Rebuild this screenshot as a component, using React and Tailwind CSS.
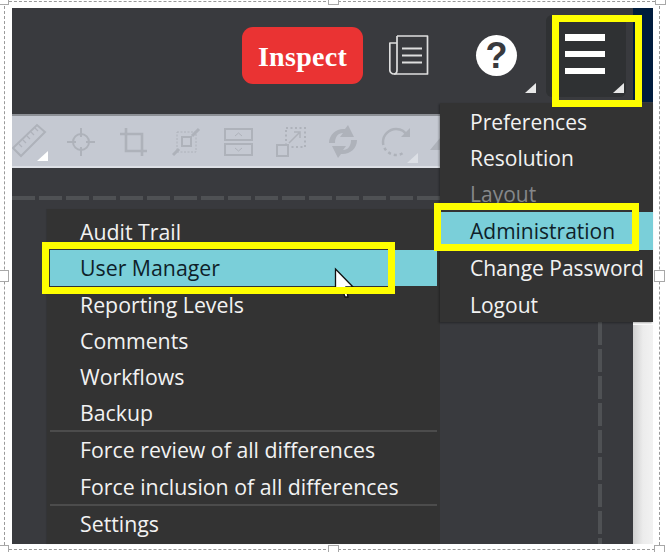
import React from "react";

const Tri = ({ className = "" }) => (
  <svg viewBox="0 0 11 10" className={"w-[11px] h-[10px] " + className}>
    <path d="M11 0V10H0Z" fill="currentColor" />
  </svg>
);

const DashH = () => (
  <svg className="w-full h-[4px] block" aria-hidden="true">
    <line x1="0" y1="2" x2="430" y2="2" stroke="#4f5154" strokeWidth="4" strokeDasharray="23 4" />
  </svg>
);

const ToolIcon = ({ children, w = 30 }) => (
  <svg viewBox={`0 0 ${w} 36`} style={{ width: w, height: 36 }} className="shrink-0 text-[#aeb2ba]" fill="none" stroke="currentColor" strokeWidth="2">
    {children}
  </svg>
);

const Item = ({ children, dim, active, className = "h-[36px] pl-[30px]" }) => (
  <div className={"flex items-center whitespace-nowrap " + className + (active ? " bg-[#7acfd9] text-[#0f1f2a]" : dim ? " text-[#85878a]" : " text-[#f2f2f2]")}>
    {children}
  </div>
);

const L = "h-[36px] pl-[33px]";

const Sep = ({ className = "" }) => <div className={"relative h-[2px] bg-[#4c4c4c] mx-[3px] -mt-[1px] " + className} />;

const YellowBox = ({ className }) => (
  <div className={"absolute border-[7px] border-[#ffff00] pointer-events-none " + className} />
);

const Handle = ({ className }) => (
  <div className={"absolute w-[11px] h-[12px] bg-white border border-[#a8a8a8] " + className} />
);

export default function App() {
  return (
    <div className="relative w-[666px] h-[552px] bg-white overflow-hidden font-['Open_Sans',sans-serif] text-[21px] leading-none pl-[12px] pr-[13px] pt-[8px] pb-[8px]">
      {/* selection frame */}
      <div className="absolute left-[4px] top-[1px] w-[656px] h-[549px] border border-dashed border-[#9a9a9a]" />
      <Handle className="left-[-2px] top-[-7px]" />
      <Handle className="left-[328px] top-[-7px]" />
      <Handle className="left-[655px] top-[-7px]" />
      <Handle className="left-[-2px] top-[270px]" />
      <Handle className="left-[654px] top-[270px]" />
      <Handle className="left-[-2px] top-[545px]" />
      <Handle className="left-[328px] top-[545px]" />
      <Handle className="left-[654px] top-[545px]" />

      <div className="relative w-[641px] h-[536px] flex bg-[#393a3e]">
        {/* main column */}
        <div className="w-[621px] flex flex-col">
          {/* header */}
          <div className="h-[106px] shrink-0 flex items-start pl-[230px]">
            <button className="mt-[19px] w-[121px] h-[57px] pt-[3px] rounded-[11px] bg-[#ea3333] text-white font-['Liberation_Serif',serif] font-bold text-[28px] tracking-[0.3px] flex items-center justify-center">
              Inspect
            </button>
            <svg viewBox="0 0 40 40" className="ml-[26px] mt-[27px] w-[40px] h-[40px] text-[#dedede]" fill="none" stroke="currentColor">
              <path d="M8 1H38.500V39H5C2.500 39 0.800 37 0.800 35V8H8" strokeWidth="1.700" strokeLinejoin="round" />
              <path d="M8 1V35C8 37 7 39 5 39" strokeWidth="1.700" />
              <path d="M13 13.500H33M13 20.500H33M13 27.500H33" strokeWidth="2.200" />
            </svg>
            <div className="relative ml-[47px] mt-[27px] w-[41px] h-[41px] rounded-full bg-white text-[#393a3e] font-['Liberation_Sans',sans-serif] font-bold text-[36px] flex items-center justify-center">
              ?
            </div>
            <Tri className="ml-[8px] mt-[75px] text-[#e8e8e8]" />
            <div className="ml-[10px] mt-[7px] w-[80px] h-[82px] rounded-[6px] bg-[#2f3133] flex flex-col pt-[19px] pl-[19px] relative">
              <div className="w-[40px] h-[7px] bg-white" />
              <div className="w-[40px] h-[6px] bg-white mt-[10px]" />
              <div className="w-[40px] h-[6px] bg-white mt-[11px]" />
              <Tri className="ml-[48px] mt-[9px] text-[#e8e8e8]" />
            </div>
          </div>

          {/* toolbar */}
          <div className="h-[54px] w-[428px] shrink-0 bg-[#c5c9d2] border-t-2 border-b-2 border-t-[#8d9096] border-b-[#dcdfe5] flex items-center overflow-hidden">
            <div className="relative w-[36px] h-[50px] flex items-center shrink-0">
              <ToolIcon w={36}>
                <path d="M1 25L25 2L33 9L9 33Z" />
                <path d="M7 21l3 3M11 17l3 3M15 13l3 3M19 9l3 3M23 5l3 3" strokeWidth="1.200" />
              </ToolIcon>
              <Tri className="absolute right-0 bottom-[5px] text-white" />
            </div>
            <div className="ml-[18px]">
              <ToolIcon>
                <circle cx="15" cy="19" r="8" />
                <path d="M15 5V14M15 24V33M1 19H10M20 19H29" />
              </ToolIcon>
            </div>
            <div className="ml-[23px]">
              <ToolIcon>
                <path d="M7 5V28H28M1 11H23V33" strokeWidth="2.600" />
              </ToolIcon>
            </div>
            <div className="ml-[23px]">
              <ToolIcon>
                <rect x="5" y="9" width="19" height="20" strokeWidth="1" strokeDasharray="2 1.500" />
                <rect x="10" y="14" width="9" height="9" strokeWidth="2" />
                <path d="M20 13L27 6M1 32L7 26" strokeWidth="3" />
              </ToolIcon>
            </div>
            <div className="ml-[22px]">
              <ToolIcon>
                <rect x="1" y="6" width="27" height="11" />
                <rect x="1" y="21" width="27" height="11" />
                <path d="M11 13l3.500-3 3.500 3M11 25l3.500 3 3.500-3" strokeWidth="1" />
              </ToolIcon>
            </div>
            <div className="ml-[22px]">
              <ToolIcon>
                <rect x="10" y="5" width="19" height="19" strokeDasharray="2 2.500" />
                <rect x="1" y="22" width="11" height="11" fill="#c5c9d2" />
                <path d="M13 20L23 10M18 9h6v6" strokeWidth="1.500" />
              </ToolIcon>
            </div>
            <div className="ml-[22px]">
              <ToolIcon>
                <path d="M1 20C1 11 9 5 17 6L20 2L26 14L12 14L15 10C10 10 7 14 7 20Z" fill="currentColor" stroke="none" />
                <path d="M29 17C29 26 21 32 13 31L10 35L4 23L18 23L15 27C20 27 23 23 23 17Z" fill="currentColor" stroke="none" />
              </ToolIcon>
            </div>
            <div className="relative ml-[23px]">
              <ToolIcon>
                <path d="M26 13C24 8 19 6 15 6C8 6 2 12 2 19" strokeWidth="2.500" />
                <path d="M2 19C2 26 8 32 15 32C18 32 21 31 23 29" strokeWidth="2.500" strokeDasharray="3 3" />
                <path d="M20 14H29V5Z" fill="currentColor" stroke="none" />
              </ToolIcon>
              <Tri className="absolute right-[-7px] bottom-[-4px] text-[#dcdfe5]" />
            </div>
            <svg viewBox="0 0 10 12" className="ml-[19px] mt-[6px] w-[10px] h-[12px] text-[#aeb2ba] shrink-0"><path d="M10 0V12H0Z" fill="currentColor" /></svg>
          </div>

          {/* canvas */}
          <div className="flex-1 flex flex-col">
            <div className="mt-[28px] w-[428px]"><DashH /></div>
          </div>
        </div>

        {/* right strip */}
        <div className="flex-1 flex flex-col">
          <div className="h-[94px] bg-[#001c3d]" />
          <div className="h-[220px]" />
          <div className="flex-1 bg-gradient-to-r from-[#cfcfcf] via-[#ececec] to-[#f2f2f2] border-t-[3px] border-t-white" />
        </div>

        {/* vertical dashes */}
        <svg className="absolute left-[586px] top-[314px] w-[4px] h-[222px]" aria-hidden="true">
          <line x1="2" y1="0" x2="2" y2="222" stroke="#4f5154" strokeWidth="4" strokeDasharray="23 4" />
        </svg>

        {/* left menu */}
        <div className="absolute left-[35px] top-[201px] w-[393px] h-[335px] bg-[#333333] pt-[5px] text-[21.3px] shadow-[-1px_0_1px_rgba(0,0,0,0.1)]">
          <Item className={L}>Audit Trail</Item>
          <Item active className="h-[36px] ml-[3px] mr-[3px] mb-[1px] pl-[30px]">User Manager</Item>
          <Item className={L}>Reporting Levels</Item>
          <Item className={L}>Comments</Item>
          <Item className={L}>Workflows</Item>
          <Item className={L}>Backup</Item>
          <Sep />
          <Item className={L}>Force review of all differences</Item>
          <Item className={"mt-[1px] " + L}>Force inclusion of all differences</Item>
          <Sep />
          <Item className={L}>Settings</Item>
        </div>

        {/* right menu */}
        <div className="absolute left-[428px] top-[95px] w-[213px] h-[219px] bg-[#333333] pt-[1px] shadow-[-1px_1px_2px_rgba(0,0,0,0.35)]">
          <Item>Preferences</Item>
          <Item>Resolution</Item>
          <Item dim>Layout</Item>
          <Item active className="h-[38px] pl-[30px]">Administration</Item>
          <Item className="h-[37px] pl-[30px]">Change Password</Item>
          <Item>Logout</Item>
        </div>

        {/* cursor */}
        <svg viewBox="0 0 20 32" className="absolute left-[322px] top-[259px] w-[20px] h-[32px]">
          <path d="M1.500 2L19 20H12L14 30H11L9 24H1.500Z" fill="white" stroke="#111" strokeWidth="1.300" />
        </svg>

        {/* annotation boxes */}
        <YellowBox className="left-[540px] top-[7px] w-[90px] h-[92px]" />
        <YellowBox className="left-[422px] top-[195px] w-[205px] h-[48px]" />
        <YellowBox className="left-[30px] top-[234px] w-[353px] h-[52px]" />
      </div>
    </div>
  );
}
